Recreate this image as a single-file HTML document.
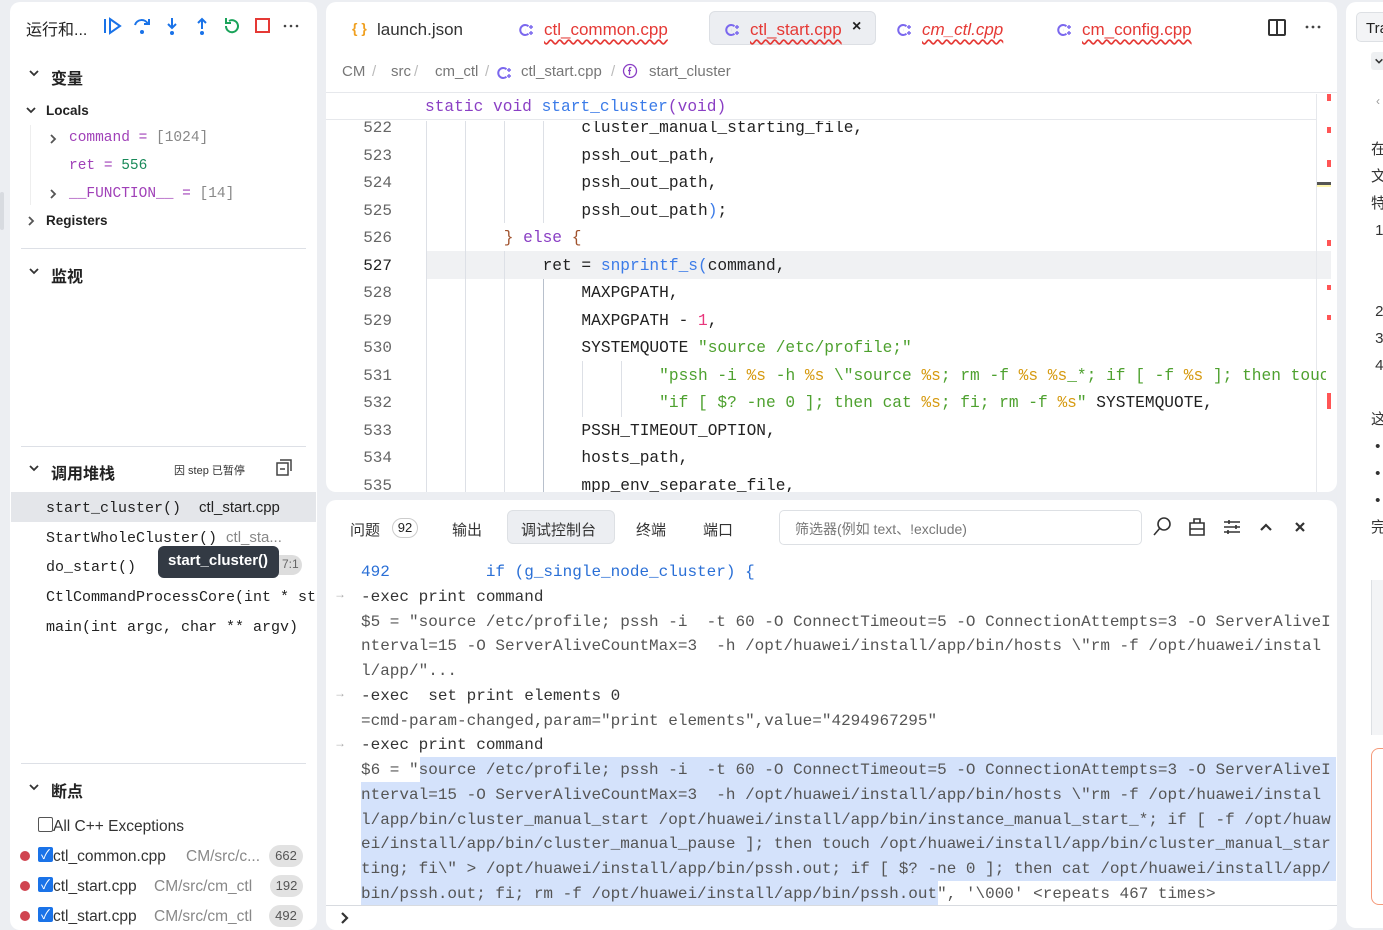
<!DOCTYPE html>
<html><head><meta charset="utf-8">
<style>
*{margin:0;padding:0;box-sizing:border-box}
body{width:1383px;height:930px;background:#eceef2;position:relative;overflow:hidden;font-family:"Liberation Sans","Noto Sans CJK SC",sans-serif;color:#222}
.a{position:absolute;white-space:pre}
.card{position:absolute;background:#fff;border-radius:10px}
.m{font-family:"Liberation Mono","Noto Sans CJK SC",monospace}
.code{font-size:16.2px;color:#222}
.wv{color:#e53935;text-decoration:underline wavy #e53935;text-underline-offset:4px}
.kw{color:#8a3fc4}.fn{color:#3b7be8}.st{color:#4ea12f}.fm{color:#d69a10}.nu{color:#e8367c}.br{color:#a0522d}
.g{position:absolute;width:1px;background:#dde0e6}
.hd{font-weight:bold;font-size:16px}
.bc{position:absolute;top:63px;font-size:15px;color:#777}
.sl{position:absolute;top:63px;font-size:15px;color:#bbb}
</style></head><body>
<svg width="0" height="0" style="position:absolute">
<defs>
<symbol id="dn" viewBox="0 0 12 12"><path d="M2 4l4 4 4-4" stroke="#333" stroke-width="1.8" fill="none"/></symbol>
<symbol id="rt" viewBox="0 0 12 12"><path d="M4 2l4 4-4 4" stroke="#555" stroke-width="1.8" fill="none"/></symbol>
<symbol id="cpp" viewBox="0 0 16 16"><path d="M10.5 4.2A5 5 0 1 0 10.5 11.8" stroke="#7b68ee" stroke-width="2" fill="none"/><path d="M7.5 8h0.1" stroke="#7b68ee" stroke-width="2.4"/><path d="M13 3v4M11 5h4M13 9v4M11 11h4" stroke="#7b68ee" stroke-width="1.4"/></symbol>
</defs></svg>

<!-- LEFT PANEL -->
<div class="card" style="left:10px;top:2px;width:307px;height:928px"></div>
<div class="a" style="left:0;top:192px;width:4px;height:38px;background:#d8dbe0;border-radius:2px"></div>
<div class="a" style="left:26px;top:16px;font-size:16px">运行和...</div>
<svg class="a" style="left:102px;top:16px" width="210" height="20" viewBox="0 0 210 20">
<path d="M3 3v14M8 3l10 7-10 7z" stroke="#1a73e8" stroke-width="2" fill="none"/>
<path d="M33 9a7 7 0 0 1 13-1M47 3v5h-5" stroke="#1a73e8" stroke-width="2" fill="none"/><circle cx="40" cy="16" r="2" fill="#1a73e8"/>
<path d="M70 2v10M66 8l4 4 4-4" stroke="#1a73e8" stroke-width="2" fill="none"/><circle cx="70" cy="17" r="2" fill="#1a73e8"/>
<path d="M100 13V3M96 7l4-4 4 4" stroke="#1a73e8" stroke-width="2" fill="none"/><circle cx="100" cy="17" r="2" fill="#1a73e8"/>
<path d="M124 10a6 6 0 1 0 3-5M124 2v5h5" stroke="#1aa35a" stroke-width="2" fill="none"/>
<rect x="154" y="3" width="13" height="13" stroke="#e53935" stroke-width="2" fill="none"/>
<circle cx="183" cy="10" r="1.3" fill="#444"/><circle cx="189" cy="10" r="1.3" fill="#444"/><circle cx="195" cy="10" r="1.3" fill="#444"/>
</svg>
<svg class="a" style="left:28px;top:67px" width="12" height="12"><use href="#dn"/></svg>
<div class="a hd" style="left:51px;top:65px">变量</div>
<svg class="a" style="left:25px;top:104px" width="12" height="12"><use href="#dn"/></svg>
<div class="a" style="left:46px;top:103px;font-size:13.5px;font-weight:bold">Locals</div>
<div class="g" style="left:30px;top:125px;height:80px;background:#eee"></div>
<svg class="a" style="left:47px;top:133px" width="12" height="12"><use href="#rt"/></svg>
<div class="a m" style="left:69px;top:130px;font-size:14.5px"><span style="color:#a040b8">command</span> <span style="color:#a040b8">=</span> <span style="color:#888">[1024]</span></div>
<div class="a m" style="left:69px;top:158px;font-size:14.5px"><span style="color:#a040b8">ret</span> <span style="color:#a040b8">=</span> <span style="color:#1a8a5a">556</span></div>
<svg class="a" style="left:47px;top:188px" width="12" height="12"><use href="#rt"/></svg>
<div class="a m" style="left:69px;top:186px;font-size:14.5px"><span style="color:#a040b8">__FUNCTION__</span> <span style="color:#a040b8">=</span> <span style="color:#888">[14]</span></div>
<svg class="a" style="left:25px;top:215px" width="12" height="12"><use href="#rt"/></svg>
<div class="a" style="left:46px;top:213px;font-size:13.5px;font-weight:bold">Registers</div>
<div class="a" style="left:21px;top:248px;width:285px;height:1px;background:#dde0e6"></div>
<svg class="a" style="left:28px;top:265px" width="12" height="12"><use href="#dn"/></svg>
<div class="a hd" style="left:51px;top:263px">监视</div>
<div class="a" style="left:21px;top:446px;width:285px;height:1px;background:#dde0e6"></div>
<svg class="a" style="left:28px;top:462px" width="12" height="12"><use href="#dn"/></svg>
<div class="a hd" style="left:51px;top:460px">调用堆栈</div>
<div class="a" style="left:174px;top:462px;font-size:11px;color:#333">因 step 已暂停</div>
<svg class="a" style="left:276px;top:459px" width="16" height="17" viewBox="0 0 16 17"><rect x="1" y="4" width="11" height="12" stroke="#444" stroke-width="1.5" fill="none"/><path d="M4 1h11v11M4 10h5" stroke="#444" stroke-width="1.5" fill="none"/></svg>
<div class="a" style="left:11px;top:492px;width:305px;height:30px;background:#e4e6ea"></div>
<div class="a m" style="left:46px;top:499px;font-size:15px">start_cluster()  <span style="font-family:'Liberation Sans';font-size:15px">ctl_start.cpp</span></div>
<div class="a m" style="left:46px;top:529px;font-size:15px">StartWholeCluster() <span style="font-family:'Liberation Sans';color:#888">ctl_sta...</span></div>
<div class="a m" style="left:46px;top:559px;font-size:15px">do_start()</div>
<div class="a" style="left:270px;top:555px;width:32px;height:20px;background:#ddd;border-radius:10px;font-size:12px;color:#666;padding:2px 0 0 12px">7:1</div>
<div class="a" style="left:158px;top:546px;width:121px;height:32px;background:#333a44;border-radius:6px;color:#fff;font-weight:bold;font-size:15px;padding:6px 0 0 10px">start_cluster()</div>
<div class="a m" style="left:46px;top:589px;font-size:15px;width:270px;overflow:hidden">CtlCommandProcessCore(int * sta</div>
<div class="a m" style="left:46px;top:619px;font-size:15px">main(int argc, char ** argv)</div>
<div class="a" style="left:21px;top:763px;width:285px;height:1px;background:#dde0e6"></div>
<svg class="a" style="left:28px;top:781px" width="12" height="12"><use href="#dn"/></svg>
<div class="a hd" style="left:51px;top:778px">断点</div>
<div class="a" style="left:38px;top:817px;width:15px;height:15px;border:1.5px solid #555;border-radius:2px"></div>
<div class="a" style="left:53px;top:818px;font-size:15.5px;color:#333">All C++ Exceptions</div>
<div class="a" style="left:20px;top:851px;width:10px;height:10px;border-radius:50%;background:#d04450"></div>
<div class="a" style="left:20px;top:881px;width:10px;height:10px;border-radius:50%;background:#d04450"></div>
<div class="a" style="left:20px;top:911px;width:10px;height:10px;border-radius:50%;background:#d04450"></div>
<div class="a" style="left:38px;top:847px;width:15px;height:15px;background:#1a73e8;border-radius:2px;color:#fff;font-size:13px;line-height:15px;text-align:center">✓</div>
<div class="a" style="left:38px;top:877px;width:15px;height:15px;background:#1a73e8;border-radius:2px;color:#fff;font-size:13px;line-height:15px;text-align:center">✓</div>
<div class="a" style="left:38px;top:907px;width:15px;height:15px;background:#1a73e8;border-radius:2px;color:#fff;font-size:13px;line-height:15px;text-align:center">✓</div>
<div class="a" style="left:53px;top:848px;font-size:15.5px;color:#333">ctl_common.cpp</div><div class="a" style="left:186px;top:848px;font-size:15.5px;color:#888">CM/src/c...</div>
<div class="a" style="left:53px;top:878px;font-size:15.5px;color:#333">ctl_start.cpp</div><div class="a" style="left:154px;top:878px;font-size:15.5px;color:#888">CM/src/cm_ctl</div>
<div class="a" style="left:53px;top:908px;font-size:15.5px;color:#333">ctl_start.cpp</div><div class="a" style="left:154px;top:908px;font-size:15.5px;color:#888">CM/src/cm_ctl</div>
<div class="a" style="left:269px;top:845px;width:34px;height:22px;background:#e2e2e2;border-radius:11px;font-size:13px;color:#555;text-align:center;line-height:22px">662</div>
<div class="a" style="left:270px;top:875px;width:33px;height:22px;background:#e2e2e2;border-radius:11px;font-size:13px;color:#555;text-align:center;line-height:22px">192</div>
<div class="a" style="left:269px;top:905px;width:34px;height:22px;background:#e2e2e2;border-radius:11px;font-size:13px;color:#555;text-align:center;line-height:22px">492</div>

<!-- EDITOR -->
<div class="card" style="left:326px;top:2px;width:1011px;height:490px"></div>
<div class="a" style="left:709px;top:11px;width:167px;height:34px;background:#eceef2;border:1px solid #dcdfe4;border-radius:6px"></div>
<div class="a" style="left:352px;top:20px;font-size:14px;color:#f0a020;font-weight:bold">{ }</div>
<div class="a" style="left:377px;top:20px;font-size:17px;color:#333">launch.json</div>
<svg class="a" style="left:518px;top:22px" width="16" height="16"><use href="#cpp"/></svg>
<div class="a wv" style="left:544px;top:20px;font-size:17px">ctl_common.cpp</div>
<svg class="a" style="left:724px;top:22px" width="16" height="16"><use href="#cpp"/></svg>
<div class="a wv" style="left:750px;top:20px;font-size:17px">ctl_start.cpp</div>
<div class="a" style="left:852px;top:18px;font-size:16px;font-weight:bold">×</div>
<svg class="a" style="left:896px;top:22px" width="16" height="16"><use href="#cpp"/></svg>
<div class="a wv" style="left:922px;top:20px;font-size:17px;font-style:italic">cm_ctl.cpp</div>
<svg class="a" style="left:1056px;top:22px" width="16" height="16"><use href="#cpp"/></svg>
<div class="a wv" style="left:1082px;top:20px;font-size:17px">cm_config.cpp</div>
<div class="a" style="left:1268px;top:19px;width:18px;height:17px;border:2px solid #333;border-radius:2px"></div>
<div class="a" style="left:1276px;top:19px;width:2px;height:17px;background:#333"></div>
<svg class="a" style="left:1304px;top:24px" width="20" height="6"><circle cx="3" cy="3" r="1.4" fill="#444"/><circle cx="9" cy="3" r="1.4" fill="#444"/><circle cx="15" cy="3" r="1.4" fill="#444"/></svg>
<div class="bc" style="left:342px">CM</div><div class="sl" style="left:372px">/</div>
<div class="bc" style="left:391px">src</div><div class="sl" style="left:414px">/</div>
<div class="bc" style="left:435px">cm_ctl</div><div class="sl" style="left:485px">/</div>
<svg class="a" style="left:496px;top:65px" width="16" height="16"><use href="#cpp"/></svg>
<div class="bc" style="left:521px">ctl_start.cpp</div><div class="sl" style="left:611px">/</div>
<svg class="a" style="left:622px;top:63px" width="16" height="16" viewBox="0 0 16 16"><circle cx="8" cy="8" r="6.5" stroke="#8a3fc4" stroke-width="1.3" fill="none"/><path d="M9.5 4.5h-1a1 1 0 0 0-1 1V12M6 7.5h3" stroke="#8a3fc4" stroke-width="1.3" fill="none"/></svg>
<div class="bc" style="left:649px">start_cluster</div>
<div class="a" style="left:326px;top:92px;width:1011px;height:1px;background:#e6e8ec"></div>
<div class="a" style="left:426px;top:251px;width:905px;height:28px;background:#f0f1f3"></div>
<div class="g" style="left:426px;top:121px;height:371px"></div>
<div class="g" style="left:465px;top:121px;height:371px"></div>
<div class="g" style="left:504px;top:121px;height:102px"></div>
<div class="g" style="left:504px;top:251px;height:241px"></div>
<div class="g" style="left:543px;top:121px;height:102px"></div>
<div class="g" style="left:543px;top:279px;height:213px;background:#b8c0cc"></div>
<div class="g" style="left:582px;top:361px;height:56px"></div>
<div class="g" style="left:621px;top:361px;height:56px"></div>
<div class="a" style="left:1316px;top:94px;width:1px;height:398px;background:#e6e8ec"></div>
<div class="a" style="left:1327px;top:94px;width:4px;height:7px;background:#f55"></div>
<div class="a" style="left:1327px;top:127px;width:4px;height:6px;background:#f55"></div>
<div class="a" style="left:1327px;top:160px;width:4px;height:7px;background:#f55"></div>
<div class="a" style="left:1317px;top:182px;width:14px;height:3px;background:#555;box-shadow:0 2px 0 #fff7b0"></div>
<div class="a" style="left:1327px;top:240px;width:4px;height:6px;background:#f55"></div>
<div class="a" style="left:1327px;top:285px;width:4px;height:5px;background:#f55"></div>
<div class="a" style="left:1327px;top:315px;width:4px;height:5px;background:#f55"></div>
<div class="a" style="left:1327px;top:393px;width:4px;height:16px;background:#f55"></div>
<div class="a" style="left:326px;top:121px;width:1000px;height:371px;overflow:hidden">
<pre class="m code" style="position:absolute;left:100px;top:-6px;line-height:27.5px;font-size:16.2px">                cluster_manual_starting_file,
                pssh_out_path,
                pssh_out_path,
                pssh_out_path<span class="fn">)</span>;
        <span class="br">}</span> <span class="kw">else</span> <span class="br">{</span>
            ret = <span class="fn">snprintf_s(</span>command,
                MAXPGPATH,
                MAXPGPATH - <span class="nu">1</span>,
                SYSTEMQUOTE <span class="st">"source /etc/profile;"</span>
                        <span class="st">"pssh -i <span class="fm">%s</span> -h <span class="fm">%s</span> \"source <span class="fm">%s</span>; rm -f <span class="fm">%s</span> <span class="fm">%s</span>_*; if [ -f <span class="fm">%s</span> ]; then touch</span>
                        <span class="st">"if [ $? -ne 0 ]; then cat <span class="fm">%s</span>; fi; rm -f <span class="fm">%s</span>"</span> SYSTEMQUOTE,
                PSSH_TIMEOUT_OPTION,
                hosts_path,
                mpp_env_separate_file,</pre>
<pre style="position:absolute;left:6px;top:-6px;line-height:27.5px;font-family:'Liberation Mono',monospace;font-size:16px;color:#666;text-align:right;width:60px">522
523
524
525
526
<span style="color:#222">527</span>
528
529
530
531
532
533
534
535</pre>
</div>
<div class="a" style="left:326px;top:94px;width:990px;height:26px;background:#fff;border-bottom:1px solid #e6e8ec"></div>
<div class="a m" style="left:425px;top:98px;font-size:16.2px"><span class="kw">static</span> <span class="kw">void</span> <span class="fn">start_cluster</span><span class="kw">(void)</span></div>

<!-- PANEL -->
<div class="card" style="left:326px;top:500px;width:1011px;height:430px"></div>
<div class="a" style="left:350px;top:519px;font-size:15px;color:#333">问题</div>
<div class="a" style="left:392px;top:518px;width:26px;height:20px;border:1px solid #ccc;border-radius:10px;font-size:13px;text-align:center;line-height:18px">92</div>
<div class="a" style="left:452px;top:519px;font-size:15px;color:#333">输出</div>
<div class="a" style="left:507px;top:510px;width:108px;height:34px;background:#eceef2;border:1px solid #dde0e4;border-radius:6px"></div>
<div class="a" style="left:521px;top:519px;font-size:15px;color:#333">调试控制台</div>
<div class="a" style="left:636px;top:519px;font-size:15px;color:#333">终端</div>
<div class="a" style="left:703px;top:519px;font-size:15px;color:#333">端口</div>
<div class="a" style="left:779px;top:510px;width:363px;height:35px;border:1px solid #dde0e4;border-radius:5px"></div>
<div class="a" style="left:795px;top:519px;font-size:14px;color:#777">筛选器(例如 text、!exclude)</div>
<svg class="a" style="left:1150px;top:515px" width="165" height="24" viewBox="0 0 165 24">
<circle cx="14" cy="9" r="6" stroke="#333" stroke-width="1.6" fill="none"/><path d="M10 13l-6 7" stroke="#333" stroke-width="1.6"/>
<path d="M40 8h14v12H40zM44 8V4h6v4M40 14h14" stroke="#333" stroke-width="1.6" fill="none"/>
<path d="M74 7h16M74 12h16M74 17h16M79 5v4M86 10v4M78 15v4" stroke="#333" stroke-width="1.6" fill="none"/>
<path d="M111 15l5-5 5 5" stroke="#333" stroke-width="2.2" fill="none"/>
<path d="M146 8l8 8M154 8l-8 8" stroke="#333" stroke-width="2.2"/>
</svg>
<div class="a" style="left:361px;top:757px;width:975px;height:148px;background:#d4e2fb"></div>
<div class="a" style="left:361px;top:757px;width:59px;height:25px;background:#fff"></div>
<div class="a" style="left:938px;top:881px;width:398px;height:24px;background:#fff"></div>
<pre class="m" style="position:absolute;left:361px;top:560px;font-size:16px;line-height:24.75px;color:#555"><span style="color:#2a6fd6">492          if (g_single_node_cluster) {</span>
<span style="color:#333">-exec print command</span>
$5 = "source /etc/profile; pssh -i  -t 60 -O ConnectTimeout=5 -O ConnectionAttempts=3 -O ServerAliveI
nterval=15 -O ServerAliveCountMax=3  -h /opt/huawei/install/app/bin/hosts \"rm -f /opt/huawei/instal
l/app/"...
<span style="color:#333">-exec  set print elements 0</span>
=cmd-param-changed,param="print elements",value="4294967295"
<span style="color:#333">-exec print command</span>
$6 = "source /etc/profile; pssh -i  -t 60 -O ConnectTimeout=5 -O ConnectionAttempts=3 -O ServerAliveI
nterval=15 -O ServerAliveCountMax=3  -h /opt/huawei/install/app/bin/hosts \"rm -f /opt/huawei/instal
l/app/bin/cluster_manual_start /opt/huawei/install/app/bin/instance_manual_start_*; if [ -f /opt/huaw
ei/install/app/bin/cluster_manual_pause ]; then touch /opt/huawei/install/app/bin/cluster_manual_star
ting; fi\" > /opt/huawei/install/app/bin/pssh.out; if [ $? -ne 0 ]; then cat /opt/huawei/install/app/
bin/pssh.out; fi; rm -f /opt/huawei/install/app/bin/pssh.out", '\000' &lt;repeats 467 times&gt;</pre>
<div class="a" style="left:334px;top:587px;font-size:12px;color:#aaa">→</div>
<div class="a" style="left:334px;top:686px;font-size:12px;color:#aaa">→</div>
<div class="a" style="left:334px;top:736px;font-size:12px;color:#aaa">→</div>
<div class="a" style="left:326px;top:905px;width:1011px;height:1px;background:#d8dbe0"></div>
<svg class="a" style="left:340px;top:911px" width="10" height="14"><path d="M2 2l5 5-5 5" stroke="#333" stroke-width="2.2" fill="none"/></svg>

<!-- RIGHT -->
<div class="card" style="left:1346px;top:2px;width:50px;height:926px"></div>
<div class="a" style="left:1356px;top:12px;width:40px;height:30px;border:1px solid #dde0e4;border-radius:5px;background:#f3f4f6;font-size:15px;padding:7px 0 0 9px">Tra</div>
<div class="a" style="left:1371px;top:52px;width:20px;height:18px;background:#eef0f2;border-radius:3px"></div>
<svg class="a" style="left:1374px;top:56px" width="10" height="10"><use href="#dn"/></svg>
<div class="a" style="left:1376px;top:94px;font-size:12px;color:#999">‹</div>
<div class="a" style="left:1371px;top:136px;font-size:15px;line-height:27px;color:#333;white-space:pre">在
文
特
 1


 2
 3
 4

这
 •
 •
 •
完</div>
<div class="a" style="left:1371px;top:580px;width:20px;height:155px;background:#f3f4f6;border-left:1px solid #dde0e4"></div>
<div class="a" style="left:1371px;top:748px;width:20px;height:157px;border:1.5px solid #f59a7a;border-radius:8px"></div>
</body></html>
